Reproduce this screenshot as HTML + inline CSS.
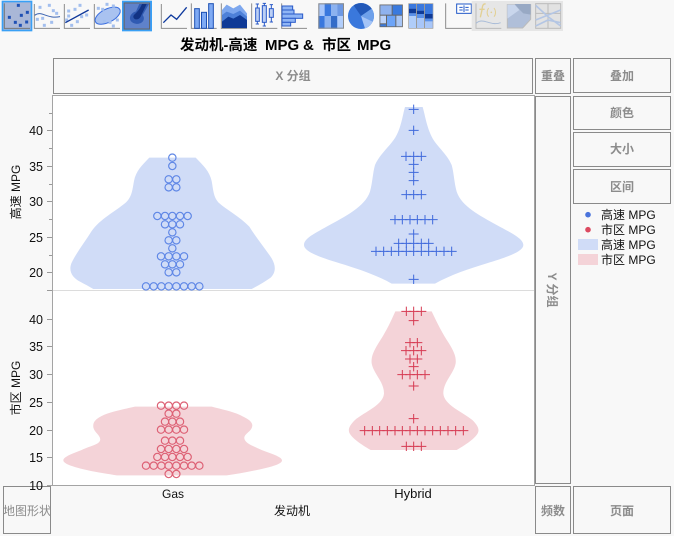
<!DOCTYPE html>
<html><head><meta charset="utf-8"><style>
html,body{margin:0;padding:0;background:#f8f8f8;width:674px;height:536px;overflow:hidden}
svg{display:block}
text{font-family:"Liberation Sans","Noto Sans CJK SC",sans-serif}
.b{fill:#f8f8f8;stroke:#8a8a8a;stroke-width:1}
.l{font-size:12px;font-weight:bold;fill:#8c8c8c;text-anchor:middle}
.t{font-size:12.5px;fill:#111;text-anchor:end}
.k{font-size:12px;fill:#111;text-anchor:middle}
.g{font-size:12px;fill:#111}
</style></head><body>
<svg width="674" height="536" viewBox="0 0 674 536" xmlns="http://www.w3.org/2000/svg">
<defs>
<circle id="c" r="11" fill="none" stroke-width="3.500"/>
<path id="p" d="M-15 0H15M0-14V14" fill="none" stroke-width="3"/>
<rect id="d" x="-4.500" y="-4.500" width="9" height="9"/>
</defs>
<rect width="674" height="536" fill="#f8f8f8"/>

<!-- toolbar -->
<g transform="scale(.33333)">
<g fill="none" stroke="#8c8c8c" stroke-width="3">
<path d="M103 12V85H180M193 12V85H270M283 12V85H360M484 12V85H561M574 10V85H650M664 10V85H741"/>
<path d="M755 10V85H832M845 10V85H921M1337 10V85H1415"/>
</g>
<!-- 1 -->
<rect x="7.500" y="4.500" width="87" height="87" fill="#a9b7d7" stroke="#39a0f5" stroke-width="5"/>
<path d="M13 10V85H90" fill="none" stroke="#777" stroke-width="3"/>
<g fill="#1e50b4">
<use href="#d" x="55" y="16"/><use href="#d" x="82" y="37"/><use href="#d" x="64" y="46"/><use href="#d" x="28" y="52"/><use href="#d" x="46" y="67"/><use href="#d" x="80" y="66"/><use href="#d" x="61" y="76"/>
</g>
<!-- 2 -->
<g fill="#a3bfee">
<use href="#d" x="148" y="16"/><use href="#d" x="120" y="22"/><use href="#d" x="160" y="32"/><use href="#d" x="170" y="40"/><use href="#d" x="128" y="55"/><use href="#d" x="112" y="58"/><use href="#d" x="155" y="67"/><use href="#d" x="133" y="76"/>
</g>
<path d="M104 46C125 30 140 58 180 50" fill="none" stroke="#3a62b0" stroke-width="3"/>
<!-- 3 -->
<g fill="#a3bfee">
<use href="#d" x="240" y="16"/><use href="#d" x="225" y="28"/><use href="#d" x="206" y="33"/><use href="#d" x="260" y="45"/><use href="#d" x="245" y="50"/><use href="#d" x="206" y="48"/><use href="#d" x="232" y="65"/><use href="#d" x="215" y="76"/><use href="#d" x="200" y="60"/>
</g>
<path d="M196 68L266 30" fill="none" stroke="#10389a" stroke-width="4"/>
<!-- 4 -->
<ellipse cx="323" cy="47" rx="41" ry="20" transform="rotate(-27 323 47)" fill="#a9c2f0" stroke="#3a6ee0" stroke-width="3"/>
<g fill="#a3bfee">
<use href="#d" x="321" y="13"/><use href="#d" x="295" y="25"/><use href="#d" x="308" y="28"/><use href="#d" x="340" y="18"/><use href="#d" x="313" y="64"/><use href="#d" x="330" y="67"/><use href="#d" x="340" y="78"/><use href="#d" x="352" y="60"/>
</g>
<!-- 5 -->
<rect x="368.500" y="4.500" width="85" height="87" fill="#5f82cb" stroke="#39a0f5" stroke-width="5"/>
<rect x="372.500" y="9" width="76" height="78" fill="#5f82cb" stroke="#666" stroke-width="3"/>
<path d="M418 12H447L428 45C440 62 420 78 400 69C382 60 390 38 408 34Z" fill="#315bb2"/>
<path d="M426 12H440L422 50C416 62 400 60 400 50C400 42 414 40 426 12Z" fill="#123384"/>
<!-- line -->
<path d="M490 68L513 45L530 58L560 22" fill="none" stroke="#0f3a9e" stroke-width="4"/>
<!-- bars -->
<g fill="#7eaaf4" stroke="#1c50b4" stroke-width="3">
<rect x="584" y="26" width="14" height="59"/><rect x="604.500" y="37" width="15" height="48"/><rect x="626" y="11" width="14" height="74"/>
</g>
<!-- area -->
<path d="M666 84V30L680 14L700 25L720 14L741 40V84Z" fill="#7da7ee"/>
<path d="M666 84V45L680 35L700 42L720 32L741 50V84Z" fill="#4d80d8"/>
<path d="M666 84V65L685 50L700 56L720 45L741 60V84Z" fill="#0f3a96"/>
<!-- box -->
<g transform="translate(720,0)" fill="#bcd0f5" stroke="#2a5ac8" stroke-width="3">
<path d="M52 12V72M47 12H57M47 72H57M73 10V78M68 10H78M68 78H78M94 14V66M89 14H99M89 66H99" fill="none"/>
<rect x="47" y="24" width="11" height="40"/><rect x="67" y="17" width="12" height="50"/><rect x="88" y="26" width="12" height="26"/>
<rect x="126" y="18" width="32" height="12" fill="#8fb5f5"/><rect x="126" y="30" width="36" height="12" fill="#8fb5f5"/><rect x="126" y="42" width="62" height="13" fill="#8fb5f5"/><rect x="126" y="55" width="40" height="12" fill="#8fb5f5"/><rect x="126" y="67" width="26" height="11" fill="#8fb5f5"/>
</g>
<!-- heat -->
<g transform="translate(720,0)">
<rect x="235" y="10" width="77" height="76" fill="#a8c6fa"/>
<rect x="254" y="10" width="19" height="38" fill="#3a78de"/>
<rect x="273" y="10" width="19" height="38" fill="#8cb2f0"/>
<rect x="292" y="10" width="20" height="38" fill="#6c98e4"/>
<rect x="235" y="48" width="19" height="38" fill="#3a78de"/>
<rect x="254" y="48" width="19" height="38" fill="#8cb2f0"/>
<rect x="273" y="48" width="19" height="38" fill="#346cc8"/>
<rect x="292" y="48" width="20" height="38" fill="#b2cefb"/>
<rect x="236.500" y="11.500" width="74" height="73" fill="none" stroke="#8a8a8a" stroke-width="3"/>
<!-- pie -->
<circle cx="363" cy="48" r="39" fill="#3a78dc"/>
<path d="M363 48L341 16A39 39 0 0 1 395 26Z" fill="#2258b8"/>
<path d="M363 48L395 26A39 39 0 0 1 398 65Z" fill="#6ea0ea"/>
<path d="M363 48L398 65A39 39 0 0 1 375 85Z" fill="#a4c4f7"/>
<!-- tree -->
<rect x="418.500" y="13.500" width="70" height="68" fill="#666"/>
<rect x="421" y="16" width="34" height="28" fill="#8fb2ee"/>
<rect x="458" y="16" width="28" height="28" fill="#3a7ade"/>
<rect x="421" y="47" width="17" height="23" fill="#bcd3fa"/>
<rect x="421" y="73" width="17" height="6" fill="#3a7ade"/>
<rect x="441" y="47" width="25" height="32" fill="#6ca4f8"/>
<rect x="469" y="47" width="17" height="32" fill="#a8c6f6"/>
<!-- mosaic -->
<rect x="505" y="10" width="75" height="76" fill="#999"/>
<rect x="507" y="12" width="21" height="72" fill="#b0cdf9"/>
<rect x="507" y="12" width="21" height="14" fill="#3a78de"/>
<rect x="507" y="26" width="21" height="14" fill="#0f3a96"/>
<rect x="507" y="40" width="21" height="8" fill="#5a90e8"/>
<rect x="531" y="12" width="21" height="72" fill="#a8c6f8"/>
<rect x="531" y="12" width="21" height="20" fill="#3a78de"/>
<rect x="531" y="32" width="21" height="10" fill="#0f3a96"/>
<rect x="531" y="42" width="21" height="12" fill="#5a90e8"/>
<rect x="555" y="12" width="23" height="72" fill="#a8c6f8"/>
<rect x="555" y="12" width="23" height="30" fill="#3a78de"/>
<rect x="555" y="42" width="23" height="14" fill="#0f3a96"/>
<rect x="555" y="56" width="23" height="8" fill="#5a90e8"/>
<!-- table -->
<rect x="650" y="12" width="44" height="28" fill="#fff" stroke="#2058c8" stroke-width="3"/>
<path d="M658 22H668M658 30H668M676 22H686M676 30H686M672 16V36" stroke="#2058c8" stroke-width="3"/>
</g>
<!-- disabled -->
<g transform="translate(1410,0)">
<rect x="5" y="3" width="274" height="90" fill="#e6e6e6"/>
<path d="M18 10V85H94" fill="none" stroke="#bbb" stroke-width="3"/>
<path d="M18 70C40 50 60 80 92 68" fill="none" stroke="#a9bcd8" stroke-width="3"/>
<path d="M47 12C38 10 37 20 36 30L31 52M28 28H44" fill="none" stroke="#e2d094" stroke-width="4"/>
<path d="M56 24C50 32 50 44 56 50M72 24C78 32 78 44 72 50" fill="none" stroke="#e2d094" stroke-width="3"/>
<circle cx="64" cy="37" r="2.500" fill="#e2d094"/>
<path d="M112 14H182V58L158 84H112Z" fill="#b0bfd9" stroke="#bbb" stroke-width="3"/>
<path d="M112 14H134L148 30L112 56Z" fill="#c9d6ec"/>
<path d="M134 12H182V44L160 40L148 28Z" fill="#98a9c4"/>
<rect x="197" y="11" width="75" height="74" fill="#e2e2e2" stroke="#bbb" stroke-width="3"/>
<path d="M234 11V85M197 40H272" stroke="#bbb" stroke-width="3"/>
<path d="M197 16L234 50L272 78M197 60L272 30M197 78L234 60L272 68" fill="none" stroke="#b4c6e4" stroke-width="5"/>
</g>
</g>

<!-- title -->
<text y="50" font-size="14.500" font-weight="bold" fill="#000"><tspan x="180">发动机-高速</tspan><tspan x="265" font-size="15">MPG</tspan><tspan x="303" font-size="15">&amp;</tspan><tspan x="322">市区</tspan><tspan x="357" font-size="15">MPG</tspan></text>

<!-- buttons -->
<rect class="b" x="53.500" y="58.500" width="479" height="35"/>
<rect class="b" x="535.500" y="58.500" width="35" height="35"/>
<rect class="b" x="573.500" y="58.500" width="97" height="34"/>
<rect class="b" x="573.500" y="96.500" width="97" height="33"/>
<rect class="b" x="573.500" y="132.500" width="97" height="34"/>
<rect class="b" x="573.500" y="169.500" width="97" height="34"/>
<rect class="b" x="535.500" y="96.500" width="35" height="387"/>
<rect class="b" x="535.500" y="486.500" width="35" height="47"/>
<rect class="b" x="573.500" y="486.500" width="97" height="47"/>
<rect class="b" x="3.500" y="486.500" width="47" height="47"/>
<text class="l" x="293" y="80">X 分组</text>
<text class="l" x="553" y="80">重叠</text>
<text class="l" x="622" y="80">叠加</text>
<text class="l" x="622" y="117">颜色</text>
<text class="l" x="622" y="153">大小</text>
<text class="l" x="622" y="191">区间</text>
<text class="l" transform="translate(548,290) rotate(90)">Y 分组</text>
<text class="l" x="553" y="515">频数</text>
<text class="l" x="622" y="515">页面</text>
<text class="l" x="27" y="515" style="font-weight:normal">地图形状</text>

<!-- plot frame -->
<rect x="53" y="96" width="481" height="390" fill="#fff"/>
<path d="M53 290.500H534" stroke="#dcdcdc" stroke-width="1"/>
<path d="M52.500 95.500H534.500V485.500H47M52.500 95V486" fill="none" stroke="#a4a4a4" stroke-width="1"/>

<!-- ticks -->
<path d="M47 130.500H52M47 166.500H52M47 201.500H52M47 237.500H52M47 272.500H52M49 113.500H52M49 148.500H52M49 184.500H52M49 219.500H52M49 255.500H52M47 290.500H52M47 319.500H52M47 346.500H52M47 374.500H52M47 402.500H52M47 430.500H52M47 457.500H52" stroke="#999" stroke-width="1"/>
<text class="t" x="43" y="135">40</text><text class="t" x="43" y="171">35</text><text class="t" x="43" y="206">30</text><text class="t" x="43" y="242">25</text><text class="t" x="43" y="277">20</text>
<text class="t" x="43" y="324">40</text><text class="t" x="43" y="351">35</text><text class="t" x="43" y="379">30</text><text class="t" x="43" y="407">25</text><text class="t" x="43" y="435">20</text><text class="t" x="43" y="462">15</text><text class="t" x="43" y="490">10</text>
<text class="k" transform="translate(20,192) rotate(-90)">高速 MPG</text>
<text class="k" transform="translate(20,388) rotate(-90)">市区 MPG</text>
<text class="k" x="173" y="498">Gas</text>
<text class="k" x="413" y="498" style="font-size:13px">Hybrid</text>
<text class="k" x="292" y="515">发动机</text>

<!-- Gas top -->
<g transform="translate(0,95) scale(.33333)">
<path d="M448 188C425 212 408 228 402 258C397 285 396 305 378 322C345 350 300 372 275 408C255 440 228 475 214 505C205 530 218 548 240 560C255 568 268 575 280 582H755C775 572 795 560 812 548C828 532 828 512 815 490C795 460 770 430 748 395C720 365 680 345 655 322C640 305 640 285 635 258C628 228 610 212 587 188Z" fill="#d0dcf7"/>
<g stroke="#5f87e6">
<use href="#c" x="517" y="188"/><use href="#c" x="517" y="213"/>
<use href="#c" x="506" y="253"/><use href="#c" x="529" y="253"/>
<use href="#c" x="506" y="277"/><use href="#c" x="529" y="277"/>
<use href="#c" x="472" y="363"/><use href="#c" x="495" y="363"/><use href="#c" x="517" y="363"/><use href="#c" x="540" y="363"/><use href="#c" x="563" y="363"/>
<use href="#c" x="495" y="388"/><use href="#c" x="517" y="388"/><use href="#c" x="540" y="388"/>
<use href="#c" x="517" y="412"/>
<use href="#c" x="506" y="436"/><use href="#c" x="529" y="436"/>
<use href="#c" x="517" y="460"/>
<use href="#c" x="483" y="484"/><use href="#c" x="506" y="484"/><use href="#c" x="529" y="484"/><use href="#c" x="552" y="484"/>
<use href="#c" x="495" y="508"/><use href="#c" x="517" y="508"/><use href="#c" x="540" y="508"/>
<use href="#c" x="506" y="532"/><use href="#c" x="529" y="532"/>
<use href="#c" x="438" y="574"/><use href="#c" x="461" y="574"/><use href="#c" x="484" y="574"/><use href="#c" x="506" y="574"/><use href="#c" x="529" y="574"/><use href="#c" x="552" y="574"/><use href="#c" x="575" y="574"/><use href="#c" x="598" y="574"/>
</g>
</g>

<!-- Hybrid top -->
<g transform="translate(290,95) scale(.33333)">
<path d="M345 36C338 60 335 90 320 120C305 150 270 175 255 210C248 235 248 260 240 290C225 335 165 365 110 395C75 415 42 430 42 450C42 470 90 487 150 505C200 520 260 540 305 566H435C480 540 540 520 590 505C650 487 700 470 700 450C700 430 660 412 620 390C570 362 515 335 500 290C492 260 492 235 485 210C470 175 440 155 425 125C410 95 405 60 398 36Z" fill="#d0dcf7"/>
<g stroke="#3f69dc">
<use href="#p" x="371" y="43"/><use href="#p" x="371" y="106"/>
<use href="#p" x="348" y="184"/><use href="#p" x="371" y="184"/><use href="#p" x="394" y="184"/>
<use href="#p" x="371" y="208"/><use href="#p" x="371" y="232"/><use href="#p" x="371" y="257"/>
<use href="#p" x="349" y="299"/><use href="#p" x="371" y="299"/><use href="#p" x="394" y="299"/>
<use href="#p" x="315" y="374"/><use href="#p" x="337" y="374"/><use href="#p" x="360" y="374"/><use href="#p" x="382" y="374"/><use href="#p" x="405" y="374"/><use href="#p" x="428" y="374"/>
<use href="#p" x="371" y="417"/>
<use href="#p" x="326" y="445"/><use href="#p" x="349" y="445"/><use href="#p" x="371" y="445"/><use href="#p" x="394" y="445"/><use href="#p" x="416" y="445"/>
<use href="#p" x="258" y="469"/><use href="#p" x="281" y="469"/><use href="#p" x="304" y="469"/><use href="#p" x="326" y="469"/><use href="#p" x="349" y="469"/><use href="#p" x="371" y="469"/><use href="#p" x="394" y="469"/><use href="#p" x="416" y="469"/><use href="#p" x="439" y="469"/><use href="#p" x="462" y="469"/><use href="#p" x="485" y="469"/>
<use href="#p" x="371" y="553"/>
</g>
</g>

<!-- Gas bottom -->
<g transform="translate(0,290) scale(.33333)">
<path d="M405 350C370 358 330 365 305 378C285 388 278 398 280 412C283 428 305 438 300 452C295 465 270 468 245 480C220 490 190 500 190 511C190 522 225 532 260 540C295 548 325 552 350 556H680C710 552 745 546 780 538C815 530 846 522 846 511C846 500 810 490 785 480C760 468 735 460 733 445C732 430 757 425 757 405C755 392 740 385 720 375C695 364 665 358 635 350Z" fill="#f4d3d8"/>
<g stroke="#dd6175">
<use href="#c" x="483" y="347"/><use href="#c" x="506" y="347"/><use href="#c" x="529" y="347"/><use href="#c" x="552" y="347"/>
<use href="#c" x="506" y="371"/><use href="#c" x="529" y="371"/>
<use href="#c" x="495" y="395"/><use href="#c" x="517" y="395"/><use href="#c" x="540" y="395"/>
<use href="#c" x="483" y="419"/><use href="#c" x="506" y="419"/><use href="#c" x="529" y="419"/><use href="#c" x="552" y="419"/>
<use href="#c" x="495" y="452"/><use href="#c" x="517" y="452"/><use href="#c" x="540" y="452"/>
<use href="#c" x="483" y="477"/><use href="#c" x="506" y="477"/><use href="#c" x="529" y="477"/><use href="#c" x="552" y="477"/>
<use href="#c" x="472" y="501"/><use href="#c" x="495" y="501"/><use href="#c" x="517" y="501"/><use href="#c" x="540" y="501"/><use href="#c" x="563" y="501"/>
<use href="#c" x="438" y="527"/><use href="#c" x="461" y="527"/><use href="#c" x="484" y="527"/><use href="#c" x="506" y="527"/><use href="#c" x="529" y="527"/><use href="#c" x="552" y="527"/><use href="#c" x="575" y="527"/><use href="#c" x="598" y="527"/>
<use href="#c" x="506" y="552"/><use href="#c" x="529" y="552"/>
</g>
</g>

<!-- Hybrid bottom -->
<g transform="translate(290,290) scale(.33333)">
<path d="M316 64C300 100 285 130 265 160C250 185 243 200 245 220C250 250 282 275 282 310C280 345 225 365 195 390C180 405 175 415 177 425C180 440 210 462 242 480H500C532 462 562 440 565 425C567 415 562 405 547 390C517 365 462 345 460 310C460 275 492 250 497 220C499 200 492 185 477 160C457 130 442 100 425 64Z" fill="#f4d3d8"/>
<g stroke="#d63a52">
<use href="#p" x="349" y="64"/><use href="#p" x="371" y="64"/><use href="#p" x="394" y="64"/>
<use href="#p" x="371" y="92"/>
<use href="#p" x="360" y="158"/><use href="#p" x="382" y="158"/>
<use href="#p" x="348" y="182"/><use href="#p" x="371" y="182"/><use href="#p" x="394" y="182"/>
<use href="#p" x="360" y="207"/><use href="#p" x="382" y="207"/>
<use href="#p" x="371" y="230"/>
<use href="#p" x="337" y="254"/><use href="#p" x="360" y="254"/><use href="#p" x="382" y="254"/><use href="#p" x="405" y="254"/>
<use href="#p" x="371" y="288"/><use href="#p" x="371" y="386"/>
<use href="#p" x="224" y="422"/><use href="#p" x="247" y="422"/><use href="#p" x="269" y="422"/><use href="#p" x="292" y="422"/><use href="#p" x="315" y="422"/><use href="#p" x="337" y="422"/><use href="#p" x="360" y="422"/><use href="#p" x="382" y="422"/><use href="#p" x="405" y="422"/><use href="#p" x="428" y="422"/><use href="#p" x="451" y="422"/><use href="#p" x="474" y="422"/><use href="#p" x="497" y="422"/><use href="#p" x="520" y="422"/>
<use href="#p" x="349" y="469"/><use href="#p" x="371" y="469"/><use href="#p" x="394" y="469"/>
</g>
</g>

<!-- legend -->
<circle cx="588" cy="214.700" r="2.800" fill="#4a74dc"/>
<circle cx="588" cy="229.700" r="2.800" fill="#dc4a60"/>
<rect x="578" y="239" width="20" height="11" fill="#d0dcf7"/>
<rect x="578" y="254" width="20" height="11" fill="#f4d3d8"/>
<text class="g" x="601" y="219">高速 MPG</text>
<text class="g" x="601" y="234">市区 MPG</text>
<text class="g" x="601" y="249">高速 MPG</text>
<text class="g" x="601" y="264">市区 MPG</text>
</svg>
</body></html>
